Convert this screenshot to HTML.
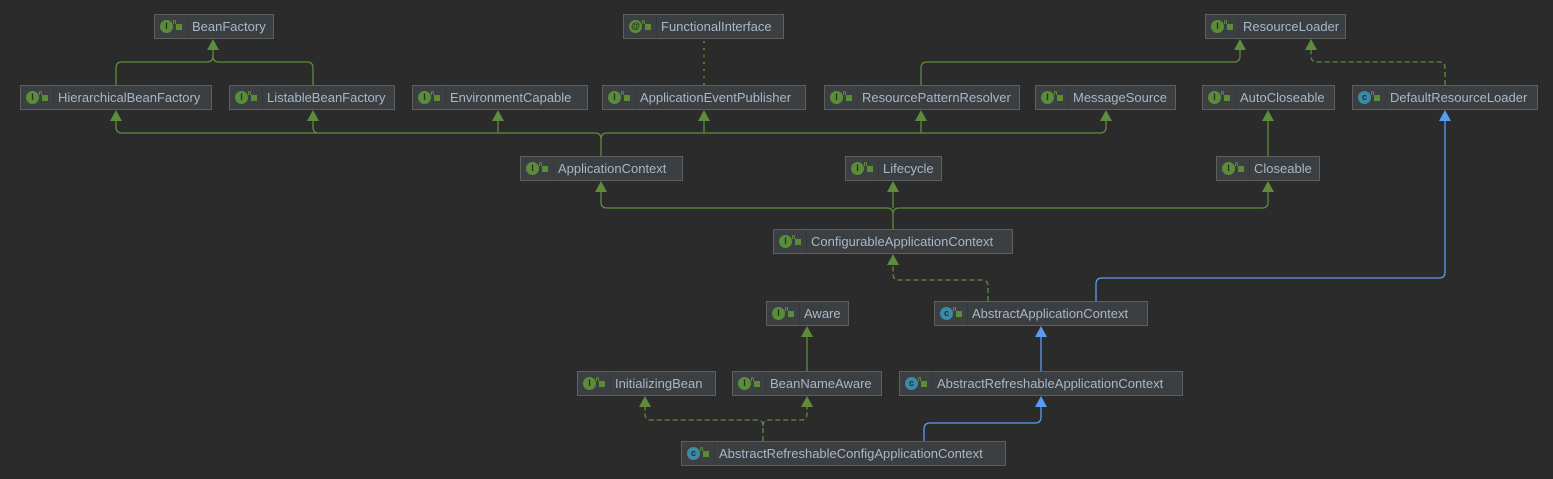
<!DOCTYPE html>
<html><head><meta charset="utf-8"><style>
body{margin:0;background:#2b2b2b;width:1553px;height:479px;overflow:hidden;position:relative;font-family:"Liberation Sans","DejaVu Sans",sans-serif}
svg{position:absolute;left:0;top:0}
.b{position:absolute;height:25px;background:#3c3f41;border:1px solid #5e6060;box-sizing:border-box;color:#a9b7c6;font-size:13px;line-height:24px;white-space:nowrap}
.b .ic{position:absolute;left:5px;top:5px;width:13px;height:13px;border-radius:50%;background:#5b8c3a;color:#2b2b2b;font-size:9px;line-height:13px;text-align:center;font-weight:bold}
.b .ic.c{background:#3a8aa8}
.b .lk{position:absolute;left:21px;top:9px;width:6px;height:6px;background:#5b8c3a}
.b .lk:before{content:"";position:absolute;left:-3px;top:-4px;width:3px;height:4px;border:1px solid #5b8c3a;border-bottom:none;border-radius:2px 2px 0 0;box-sizing:border-box}
.b .sp{position:absolute;left:32px;top:0;height:23px;border-left:1px solid #353738}
.b .t{position:absolute;left:37px;top:0}
</style></head><body>
<svg width="1553" height="479" fill="none">
<g stroke="#5e8c3c" stroke-width="1.3">
<path d="M116 85V68q0-6 6-6H207q6 0 6-6V45M313 85V68q0-6-6-6H219q-6 0-6-6"/>
<path d="M601 156V139q0-6-6-6H122q-6 0-6-6V116M601 139q0-6 6-6H1100q6 0 6-6V116M313 133H319q-6 0-6-6V116M498 133q-0 0 0-6V116M704 133V116M921 133V116"/>
<path d="M921 85V68q0-6 6-6H1234q6 0 6-6V45"/>
<path d="M1268 156V116"/>
<path d="M893 229V214q0-6-6-6H607q-6 0-6-6V187M893 214q0-6 6-6H1262q6 0 6-6V187M893 208V187"/>
<path d="M807 371V332"/>
</g>
<path d="M704 41V85" stroke="#8a8a2a" stroke-width="1.3" stroke-dasharray="2 5"/>
<g stroke="#5e8c3c" stroke-width="1.3" stroke-dasharray="5 3">
<path d="M1445 85V68q0-6-6-6H1317q-6 0-6-6V45"/>
<path d="M988 301V286q0-6-6-6H899q-6 0-6-6V260"/>
<path d="M763 441V426q0-6-6-6H651q-6 0-6-6V402M763 426q0-6 6-6H801q6 0 6-6V402"/>
</g>
<g stroke="#5a9cf0" stroke-width="1.3">
<path d="M1096 301V284q0-6 6-6H1439q6 0 6-6V116"/>
<path d="M1041 371V332"/>
<path d="M924 441V429q0-6 6-6H1035q6 0 6-6V402"/>
</g>
<g fill="#5e8c3c">
<path d="M213 39l-6 11h12zM1240 39l-6 11h12zM1311 39l-6 11h12zM116 110l-6 11h12zM313 110l-6 11h12zM498 110l-6 11h12zM704 110l-6 11h12zM921 110l-6 11h12zM1106 110l-6 11h12zM1268 110l-6 11h12zM601 181l-6 11h12zM893 181l-6 11h12zM1268 181l-6 11h12zM893 254l-6 11h12zM807 326l-6 11h12zM645 396l-6 11h12zM807 396l-6 11h12z"/>
</g>
<g fill="#5a9cf0"><path d="M1445 110l-6 11h12zM1041 326l-6 11h12zM1041 396l-6 11h12z"/></g>
</svg>
<div class="b" style="left:154px;top:14px;width:120px"><span class="ic">I</span><span class="lk"></span><span class="sp"></span><span class="t">BeanFactory</span></div>
<div class="b" style="left:623px;top:14px;width:161px"><span class="ic">@</span><span class="lk"></span><span class="sp"></span><span class="t">FunctionalInterface</span></div>
<div class="b" style="left:1205px;top:14px;width:141px"><span class="ic">I</span><span class="lk"></span><span class="sp"></span><span class="t">ResourceLoader</span></div>
<div class="b" style="left:20px;top:85px;width:192px"><span class="ic">I</span><span class="lk"></span><span class="sp"></span><span class="t">HierarchicalBeanFactory</span></div>
<div class="b" style="left:229px;top:85px;width:166px"><span class="ic">I</span><span class="lk"></span><span class="sp"></span><span class="t">ListableBeanFactory</span></div>
<div class="b" style="left:412px;top:85px;width:176px"><span class="ic">I</span><span class="lk"></span><span class="sp"></span><span class="t">EnvironmentCapable</span></div>
<div class="b" style="left:602px;top:85px;width:204px"><span class="ic">I</span><span class="lk"></span><span class="sp"></span><span class="t">ApplicationEventPublisher</span></div>
<div class="b" style="left:824px;top:85px;width:196px"><span class="ic">I</span><span class="lk"></span><span class="sp"></span><span class="t">ResourcePatternResolver</span></div>
<div class="b" style="left:1035px;top:85px;width:141px"><span class="ic">I</span><span class="lk"></span><span class="sp"></span><span class="t">MessageSource</span></div>
<div class="b" style="left:1202px;top:85px;width:133px"><span class="ic">I</span><span class="lk"></span><span class="sp"></span><span class="t">AutoCloseable</span></div>
<div class="b" style="left:1352px;top:85px;width:186px"><span class="ic c">c</span><span class="lk"></span><span class="sp"></span><span class="t">DefaultResourceLoader</span></div>
<div class="b" style="left:520px;top:156px;width:163px"><span class="ic">I</span><span class="lk"></span><span class="sp"></span><span class="t">ApplicationContext</span></div>
<div class="b" style="left:845px;top:156px;width:97px"><span class="ic">I</span><span class="lk"></span><span class="sp"></span><span class="t">Lifecycle</span></div>
<div class="b" style="left:1216px;top:156px;width:104px"><span class="ic">I</span><span class="lk"></span><span class="sp"></span><span class="t">Closeable</span></div>
<div class="b" style="left:773px;top:229px;width:240px"><span class="ic">I</span><span class="lk"></span><span class="sp"></span><span class="t">ConfigurableApplicationContext</span></div>
<div class="b" style="left:766px;top:301px;width:83px"><span class="ic">I</span><span class="lk"></span><span class="sp"></span><span class="t">Aware</span></div>
<div class="b" style="left:934px;top:301px;width:214px"><span class="ic c">c</span><span class="lk"></span><span class="sp"></span><span class="t">AbstractApplicationContext</span></div>
<div class="b" style="left:577px;top:371px;width:139px"><span class="ic">I</span><span class="lk"></span><span class="sp"></span><span class="t">InitializingBean</span></div>
<div class="b" style="left:732px;top:371px;width:150px"><span class="ic">I</span><span class="lk"></span><span class="sp"></span><span class="t">BeanNameAware</span></div>
<div class="b" style="left:899px;top:371px;width:284px"><span class="ic c">c</span><span class="lk"></span><span class="sp"></span><span class="t">AbstractRefreshableApplicationContext</span></div>
<div class="b" style="left:681px;top:441px;width:325px"><span class="ic c">c</span><span class="lk"></span><span class="sp"></span><span class="t">AbstractRefreshableConfigApplicationContext</span></div>
</body></html>
